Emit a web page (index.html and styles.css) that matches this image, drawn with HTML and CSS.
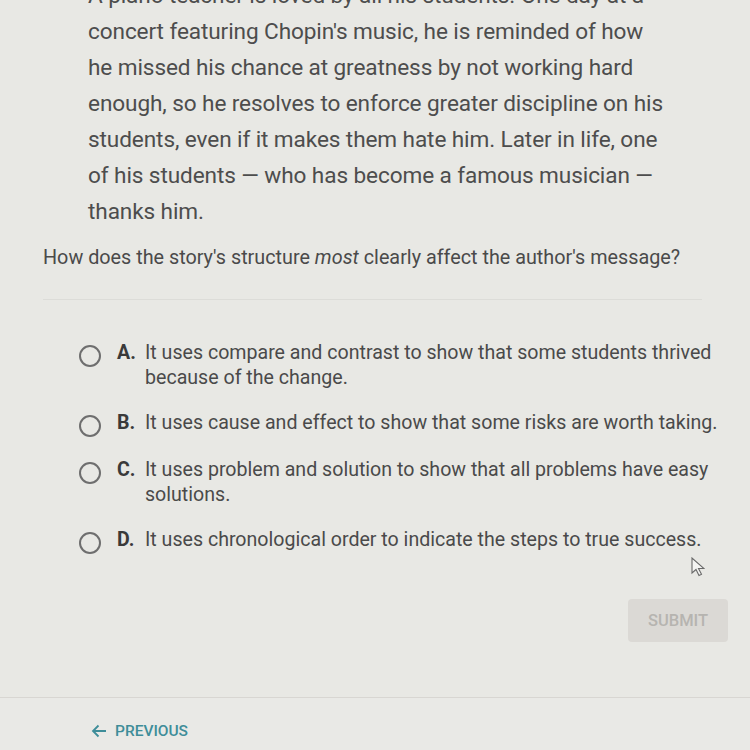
FILE: index.html
```html
<!DOCTYPE html>
<html>
<head>
<meta charset="utf-8">
<link rel="stylesheet" href="styles.css">
</head>
<body>
<div class="page">
  <div class="content">
    <p class="passage">A piano teacher is loved by all his students. One day at a<br>concert featuring Chopin's music, he is reminded of how<br>he missed his chance at greatness by not working hard<br>enough, so he resolves to enforce greater discipline on his<br>students, even if it makes them hate him. Later in life, one<br>of his students &mdash; who has become a famous musician &mdash;<br>thanks him.</p>
    <p class="question">How does the story's structure <em>most</em> clearly affect the author's message?</p>
    <div class="divider"></div>
    <div class="options">
      <div class="option"><span class="radio"></span><span class="letter">A.</span><span class="text">It uses compare and contrast to show that some students thrived<br>because of the change.</span></div>
      <div class="option"><span class="radio"></span><span class="letter">B.</span><span class="text">It uses cause and effect to show that some risks are worth taking.</span></div>
      <div class="option"><span class="radio"></span><span class="letter">C.</span><span class="text">It uses problem and solution to show that all problems have easy<br>solutions.</span></div>
      <div class="option"><span class="radio"></span><span class="letter">D.</span><span class="text">It uses chronological order to indicate the steps to true success.</span></div>
    </div>
    <div class="actions">
      <button class="submit">SUBMIT</button>
    </div>
  </div>
  <div class="footer">
    <a class="prev"><svg width="16" height="14" viewBox="0 0 16 14"><path d="M15 7H2M7.5 1.5L2 7l5.5 5.5" fill="none" stroke="#3e8d99" stroke-width="1.8"/></svg>PREVIOUS</a>
  </div>
  <svg class="cursor" width="14" height="20" viewBox="0 0 14 20"><path d="M1 1v15l4-3.5 3 6 2.5-1.2-3-5.8h5.5z" fill="#f4f4f2" stroke="#6a6a6a" stroke-width="1.1"/></svg>
</div>
</body>
</html>
```

FILE: styles.css
```css
html, body {
  margin: 0;
  padding: 0;
}
body {
  width: 750px;
  height: 750px;
  overflow: hidden;
  background: #e8e8e4;
  font-family: Roboto, "Liberation Sans", sans-serif;
  color: #4a4a4a;
}
.page {
  position: relative;
  width: 750px;
  height: 750px;
  display: flex;
  flex-direction: column;
}
.content {
  flex: 1;
  display: flex;
  flex-direction: column;
}
.passage {
  margin: -22px 0 0 88px;
  font-size: 22.6px;
  line-height: 36px;
  color: #4d4d4d;
  letter-spacing: -0.1px;
}
.question {
  margin: 16px 0 0 43px;
  font-size: 19.8px;
  line-height: 24px;
  color: #4a4a4a;
}
.divider {
  margin: 29px 48px 0 43px;
  height: 1px;
  background: #dcdcd8;
}
.options {
  margin: 40px 0 0 79px;
  display: flex;
  flex-direction: column;
  gap: 20px;
}
.option {
  display: flex;
  align-items: flex-start;
  font-size: 19.6px;
  line-height: 25px;
  color: #4a4a4a;
}
.radio {
  width: 18px;
  height: 18px;
  border: 2px solid #6e6e6e;
  border-radius: 50%;
  margin-top: 5px;
  flex: none;
}
.letter {
  width: 28px;
  margin-left: 16px;
  font-weight: 700;
  color: #3a3a3a;
  flex: none;
}
.actions {
  display: flex;
  justify-content: flex-end;
  padding: 45px 22px 0 0;
}
.submit {
  width: 100px;
  height: 43px;
  border: none;
  border-radius: 4px;
  background: #dbd9d5;
  color: #b6b4b0;
  font-family: Roboto, "Liberation Sans", sans-serif;
  font-size: 16.5px;
  font-weight: 500;
}
.footer {
  height: 52px;
  border-top: 1px solid #d8d6d2;
  background: #e9e9e6;
  display: flex;
  align-items: center;
  padding-left: 91px;
}
.prev {
  display: flex;
  align-items: center;
  gap: 8px;
  color: #3e8d99;
  font-size: 15.5px;
  font-weight: 500;
  margin-top: 14px;
}
.cursor {
  position: absolute;
  left: 691px;
  top: 557px;
}
```
